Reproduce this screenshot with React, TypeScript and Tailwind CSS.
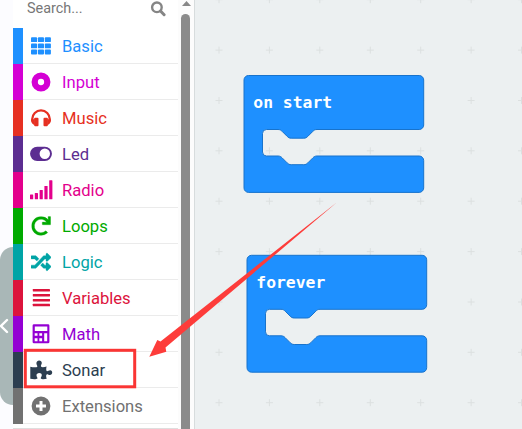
import type { ReactNode } from 'react';
import { FaRandom, FaRedo } from 'react-icons/fa';

type Category = { name: string; bar: string; ink: string; icon: ReactNode };

const categories: Category[] = [
  {
    name: 'Basic', bar: 'bg-[#1e90ff]', ink: 'text-[#1e90ff]',
    icon: <g>{[3.3, 9.5, 15.6].map(y => [2, 8.9, 15.8].map(x => <rect key={`${x}-${y}`} x={x} y={y} width="6.1" height="4.8" rx=".9" />))}</g>,
  },
  {
    name: 'Input', bar: 'bg-[#d400d4]', ink: 'text-[#d400d4]',
    icon: <circle cx="12" cy="12" r="6.3" fill="none" stroke="currentColor" strokeWidth="6.3" />,
  },
  {
    name: 'Music', bar: 'bg-[#e63022]', ink: 'text-[#e63022]',
    icon: (
      <g>
        <path d="M3.200 15.500v-2.300a8.800 8.800 0 0 1 17.600 0v2.300" fill="none" stroke="currentColor" strokeWidth="2.300" />
        <path d="M2.200 14.500 5.800 12.400v6.800C3.800 18.600 2.200 17 2.200 14.500ZM21.800 14.500l-3.600-2.100v6.800c2-.6 3.600-2.200 3.600-4.700Z" />
        <rect x="5.200" y="11.700" width="4.300" height="8.600" rx="1" />
        <rect x="14.500" y="11.700" width="4.300" height="8.600" rx="1" />
      </g>
    ),
  },
  {
    name: 'Led', bar: 'bg-[#5c2d91]', ink: 'text-[#5c2d91]',
    icon: <path fillRule="evenodd" d="M8.200 4.700h7.600a7.150 7.150 0 0 1 0 14.300H8.200a7.150 7.150 0 0 1 0-14.300ZM15.800 6.600a5.200 5.200 0 1 0 0 10.400a5.200 5.200 0 1 0 0-10.400Z" />,
  },
  {
    name: 'Radio', bar: 'bg-[#e3008c]', ink: 'text-[#e3008c]',
    icon: <g>{[[1, 16.5], [5.8, 15], [10.6, 12], [15.4, 8], [20.2, 2.3]].map(([x, y]) => <rect key={x} x={x} y={y} width="3.2" height={21.3 - y} rx=".5" />)}</g>,
  },
  {
    name: 'Loops', bar: 'bg-[#00aa00]', ink: 'text-[#00aa00]',
    icon: <FaRedo x="2.300" y="2.200" size="19.500" stroke="currentColor" strokeWidth="8" />,
  },
  {
    name: 'Logic', bar: 'bg-[#00a4a6]', ink: 'text-[#00a4a6]',
    icon: <FaRandom x="2" y="2" size="20" stroke="currentColor" strokeWidth="10" />,
  },
  {
    name: 'Variables', bar: 'bg-[#dc143c]', ink: 'text-[#dc143c]',
    icon: <g>{[3, 7.9, 12.9, 17.8].map(y => <rect key={y} x="3.800" y={y} width="17.200" height="2.500" rx=".4" />)}</g>,
  },
  {
    name: 'Math', bar: 'bg-[#9400d3]', ink: 'text-[#9400d3]',
    icon: <path fillRule="evenodd" d="M5 2.200h14q1.400 0 1.400 1.400v16.300q0 1.400-1.400 1.400H5q-1.400 0-1.400-1.400V3.600q0-1.400 1.400-1.400ZM5.800 4.600v4.300h12.500V4.600ZM5.700 11.300v2.500h2.800v-2.500ZM10.300 11.300v2.500h2.800v-2.500ZM15.200 11.300v7.900h3v-7.900ZM5.700 16.300v2.900h2.800v-2.900ZM10.300 16.300v2.900h2.800v-2.900Z" />,
  },
  {
    name: 'Sonar', bar: 'bg-[#2c3e50]', ink: 'text-[#2c3e50]',
    icon: <path d="M1.300 8.800c2.700.6 5.600.8 6.800.1 1-.7-1-2.200-.7-3.800.2-1.500 1.300-2.600 2.700-2.600 1.700 0 2.700 1.200 2.700 2.600 0 1.400-1.600 2.700-.6 3.700 1 .8 3.600.2 5.400-.2-.4 1.800-.6 3.500.1 4.500.8.800 2-.8 3.500-.8 1.400 0 2 1.100 2 2.300 0 1.500-.9 2.500-2.300 2.500-1.400 0-2.300-1.200-3.200-.6-1.100.7-.3 2.900 0 4.300-2 .4-4.900.5-5.700-.1-.9-.9.800-1.900.8-3.400 0-1.300-1-2.200-2.600-2.200s-2.700.9-2.700 2.300c0 1.500 1.600 2.500.9 3.200-.8.800-4.200.9-7.100.2Z" />,
  },
  {
    name: 'Extensions', bar: 'bg-[#717171]', ink: 'text-[#717171]',
    icon: <path fillRule="evenodd" d="M12 2.600a9.400 9.400 0 1 0 0 18.800a9.400 9.400 0 1 0 0-18.800ZM10.500 7h3v3.500H17v3h-3.500V17h-3v-3.500H7v-3h3.500Z" />,
  },
];

const gridX = [219, 269.4, 319.8, 370.3, 420.7, 471.1, 521.5];
const gridY = [-0.3, 50.1, 100.5, 150.8, 201.2, 251.6, 302, 352.3, 402.7];
const blocks = [
  { x: 244, y: 75.5, label: 'on start' },
  { x: 247, y: 255.3, label: 'forever' },
];

function Toolbox() {
  return (
    <aside className="flex h-full w-[181px] shrink-0 bg-white">
      <div className="w-[165px] shrink-0">
        <div className="flex h-7 items-start justify-between pl-[14px] pr-3">
          <span className="text-[14.4px] leading-[18px] text-[#777]">Search...</span>
          <svg className="mt-[1px] h-4 w-4 text-[#858585]" viewBox="0 0 16 16" fill="none" stroke="currentColor">
            <circle cx="6.900" cy="6.300" r="4.800" strokeWidth="2.400" />
            <path d="m10.500 10 3.600 3.700" strokeWidth="3" strokeLinecap="round" />
          </svg>
        </div>
        {categories.map(({ name, bar, ink, icon }) => (
          <div key={name} className={`flex h-9 ${ink}`}>
            <div className={`w-[10px] shrink-0 ${bar}`} />
            <div className="flex flex-1 items-center border-b border-[#ebebeb] pl-1.5">
              <svg className="mt-px h-6 w-6 shrink-0" viewBox="0 0 24 24" fill="currentColor">{icon}</svg>
              <span className="pl-[9px] pt-[3px] text-[16.6px] leading-6">{name}</span>
            </div>
          </div>
        ))}
        <div className="mt-1 h-px bg-[#dedede]" />
      </div>
      <div className="flex w-4 shrink-0 flex-col items-center bg-[#fcfcfc] pl-[1px]">
        <svg className="mt-[1px] h-[5px] w-[9px] shrink-0" viewBox="0 0 9 5" fill="#888"><path d="m4.500 0 4.500 5H0Z" /></svg>
      </div>
    </aside>
  );
}

export default function App() {
  return (
    <main className="relative flex h-[429px] w-[522px] overflow-hidden bg-[#fcfcff] font-[Roboto,sans-serif]">
      <div className="flex w-[13px] shrink-0 flex-col pt-[247px]">
        <div className="flex h-[158px] items-center rounded-l-[14px] bg-[#a9b7b7]">
          <svg className="h-4 w-[9px]" viewBox="0 0 9 16" fill="none" stroke="white" strokeWidth="2.400"><path d="m7 2-6 6 6 6" strokeLinecap="round" /></svg>
        </div>
      </div>
      <Toolbox />
      <section className="relative h-full flex-1 border-l border-[#d7dcdd] bg-[#ecf0f1]" />
      <svg className="absolute inset-0" width="522" height="429" viewBox="0 0 522 429">
        {gridX.map(x => gridY.map(y => <path key={`${x}-${y}`} d={`M${x - 3.5} ${y}h7m-3.500-3.500v7`} stroke="#dce0e0" />))}
        <path d="M181 429V18.500a4.500 4.500 0 0 1 9 0v410.500Z" fill="#8b8b8b" />
        {blocks.map(({ x, y, label }) => (
          <g key={label} transform={`translate(${x} ${y})`}>
            <path d="M4.500 0H175.200a4.500 4.500 0 0 1 4.500 4.500V49.500a4.500 4.500 0 0 1-4.500 4.500H73c-2 0-3 .7-4.200 1.900l-5 5c-1.200 1.200-2.300 1.800-4 1.800H47.200c-1.700 0-2.800-.6-4-1.800l-5-5C37 54.700 36 54 34 54H22.500a4 4 0 0 0-4 4V76.500a4 4 0 0 0 4 4H34c2 0 3 .7 4.200 1.900l5 5c1.200 1.200 2.300 1.800 4 1.800H59.800c1.700 0 2.800-.6 4-1.800l5-5C70 81.200 71 80.500 73 80.500H175.200a4.500 4.500 0 0 1 4.500 4.500V112.400a4.500 4.500 0 0 1-4.500 4.500H4.500a4.500 4.500 0 0 1-4.500-4.500V4.500A4.500 4.500 0 0 1 4.500 0Z" fill="#1e90ff" stroke="#1873cc" />
            <text x="9.300" y="32.500" className="fill-white font-['DejaVu_Sans_Mono',monospace] text-[16px] font-bold" textLength={label.length * 9.85} lengthAdjust="spacingAndGlyphs">{label}</text>
          </g>
        ))}
        <path d="M337 202.300 165.500 347.500l.8 4.200-17 5 8-16.700 3.200 1.500Z" fill="#fd3c3a" />
        <rect x="25.300" y="350.300" width="109.400" height="36.500" fill="none" stroke="#fa3534" strokeWidth="3" />
      </svg>
    </main>
  );
}
